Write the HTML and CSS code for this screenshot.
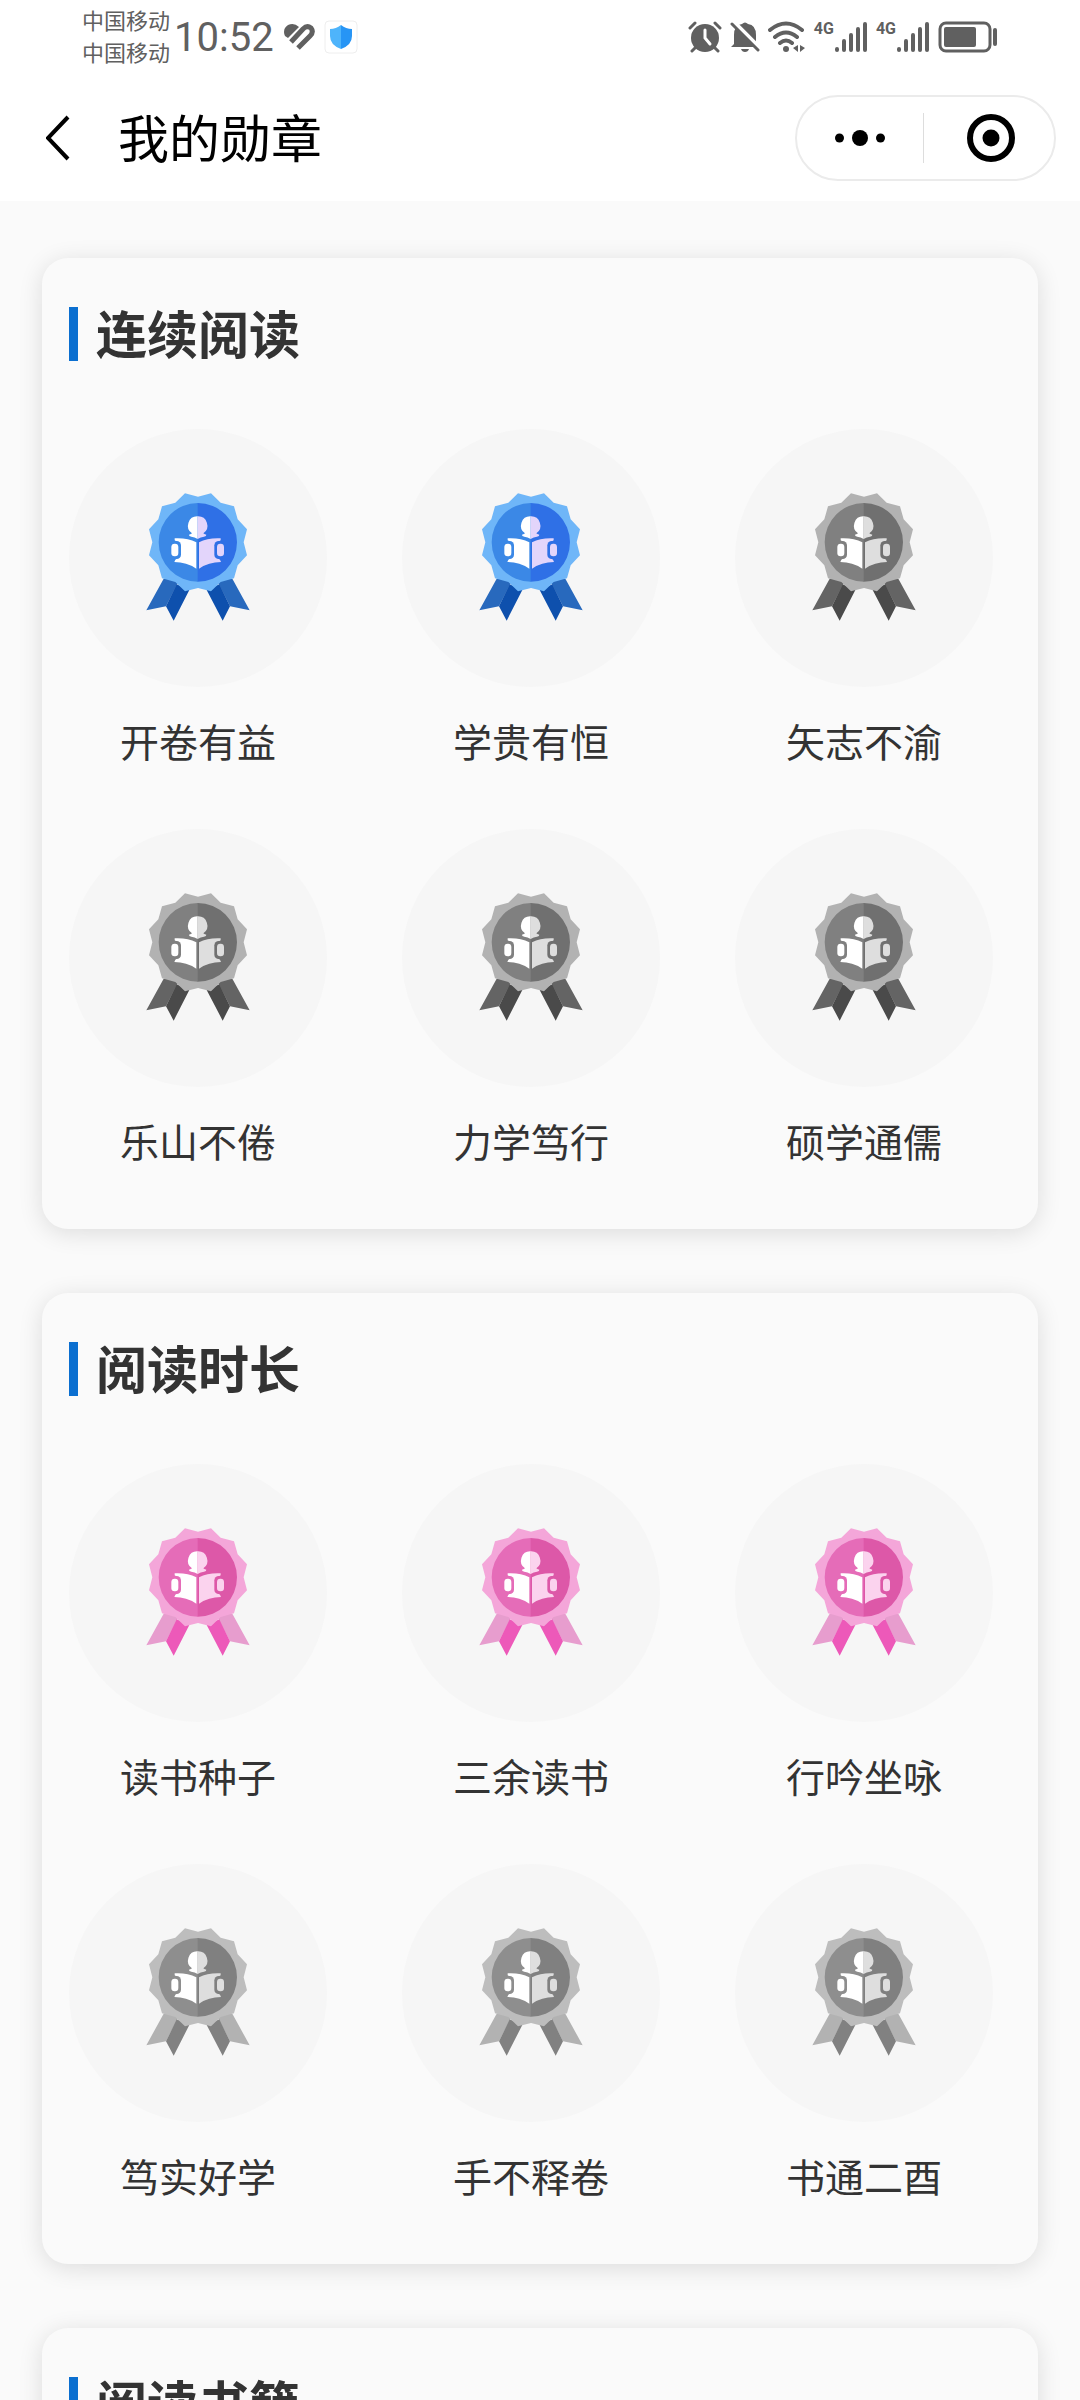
FILE: index.html
```html
<!DOCTYPE html>
<html lang="zh-CN">
<head>
    <meta charset="UTF-8">
    <meta name="viewport" content="width=device-width, initial-scale=1.0">
    <title>我的勋章</title>

    <link rel="stylesheet" href="styles.css">
</head>
<body>
    <!-- Shared icon shapes -->
    <svg class="defs" aria-hidden="true">
        <symbol id="medal" viewBox="0 10 408 450">
            <path class="ribbon" d="M101 297L150 300L140 316L108 380L49 392Z M307 297L258 300L268 316L300 380L359 392Z"/>
            <path class="ribbon-dark" d="M140 314L178 331L131 423L108 380Z M268 314L230 331L278 423L300 380Z"/>
            <path class="seal" d="M204 51L243 41L272 69L312 80L323 119L351 149L341 188L351 227L323 257L312 296L272 307L243 335L204 325L165 335L136 307L96 296L85 257L57 227L67 188L57 149L85 119L96 80L136 69L165 41Z"/>
            <path class="face" d="M204 70A118 118 0 0 0 204 306Z"/>
            <path class="face-dark" d="M203 70A118 118 0 0 1 203 306Z"/>
            <path class="page" d="M203 110A28 28 0 0 0 186 161Q184 164 177 165Q176 170 184 171Q194 172 203 178Z"/>
            <path class="page-dark" d="M203 110A28 28 0 0 1 220 161Q222 164 229 165Q230 170 222 171Q212 172 203 178Z"/>
            <path class="page" d="M134 176Q172 174 199 188V267Q170 247 133 247L136 240Q142 237 145 231V191Q142 186 134 182Z"/>
            <path class="page-dark" d="M272 176Q234 174 207 188V267Q236 247 273 247L270 240Q264 237 261 231V191Q264 186 272 182Z"/>
            <rect class="face" x="124" y="184" width="29" height="54" rx="13"/>
            <rect class="face-dark" x="253" y="184" width="29" height="54" rx="13"/>
            <rect class="page" x="124" y="192" width="21" height="38" rx="10"/>
            <rect class="page-dark" x="261" y="192" width="21" height="38" rx="10"/>
        </symbol>
        <symbol id="signal" viewBox="0 0 34 32">
            <path d="M3 29V28M10 29V20M17 29V14M24 29V8M31 29V3" fill="none" stroke="currentColor" stroke-width="4" stroke-linecap="round"/>
        </symbol>
    </svg>

    <div class="screen">
        <div class="status-bar">
            <div class="carriers">
                <span>中国移动</span>
                <span>中国移动</span>
            </div>
            <span class="clock">10:52</span>
            <svg class="health" width="32" height="28" viewBox="0 0 32 28">
                <path d="M2 13Q-1 6 5 2Q11-1 16 4L5 15Z" fill="currentColor"/>
                <path d="M8 19L20 6Q24 2 28 5Q31 9 27 13L15 25" fill="none" stroke="currentColor" stroke-width="5"/>
            </svg>
            <svg class="shield" width="34" height="34" viewBox="0 0 34 34">
                <rect x="1" y="1" width="32" height="32" rx="4" fill="#fff" stroke="#eee"/>
                <path d="M17 5Q12 9 6 9V16Q6 25 17 29Z" fill="#4eb4fb"/>
                <path d="M17 5Q22 9 28 9V16Q28 25 17 29Z" fill="#2795f5"/>
            </svg>

            <div class="indicators">
                <svg width="34" height="32" viewBox="0 0 34 32">
                    <circle cx="17" cy="17" r="14" fill="currentColor"/>
                    <path d="M2 7L7 2M32 7L27 2M7 27L4 30M27 27L30 30" stroke="currentColor" stroke-width="3" stroke-linecap="round"/>
                    <path d="M17 9V17L22 23" fill="none" stroke="#fff" stroke-width="3" stroke-linecap="round"/>
                </svg>
                <svg width="30" height="32" viewBox="0 0 30 32">
                    <path d="M4 23V14Q4 4 12 3Q15 0 18 3Q26 4 26 14V23L29 26H1ZM11 28H19Q18 31 15 31Q12 31 11 28Z" fill="currentColor"/>
                    <path d="M3 0L31 28" stroke="#fff" stroke-width="4"/>
                    <path d="M2 3L28 29" stroke="currentColor" stroke-width="3" stroke-linecap="round"/>
                </svg>
                <svg width="38" height="32" viewBox="0 0 38 32">
                    <path d="M2 9Q18-4 34 9M7 16Q18 7 29 16M12 22Q18 17 24 22" fill="none" stroke="currentColor" stroke-width="4" stroke-linecap="round"/>
                    <circle cx="18" cy="28" r="3" fill="currentColor"/>
                    <path d="M30 24V31L25 27ZM32 24V31L37 27Z" fill="currentColor"/>
                </svg>
                <div class="network">
                    <span>4G</span>
                    <svg width="34" height="32"><use href="#signal"/></svg>
                </div>
                <div class="network">
                    <span>4G</span>
                    <svg width="34" height="32"><use href="#signal"/></svg>
                </div>
                <svg width="60" height="32" viewBox="0 0 60 32">
                    <rect x="2" y="2" width="50" height="28" rx="6" fill="none" stroke="currentColor" stroke-width="3"/>
                    <rect x="6" y="6" width="32" height="20" rx="2" fill="currentColor"/>
                    <path d="M57 9V23" stroke="currentColor" stroke-width="4" stroke-linecap="round"/>
                </svg>
            </div>
        </div>

        <header class="nav">
            <button class="back" type="button" aria-label="返回">
                <svg width="24" height="46" viewBox="0 0 24 46">
                    <path d="M22 2L2 23L22 44" fill="none" stroke="currentColor" stroke-width="4"/>
                </svg>
            </button>
            <h1>我的勋章</h1>
            <div class="capsule">
                <button type="button" aria-label="更多">
                    <svg width="50" height="16" viewBox="0 0 50 16" fill="currentColor">
                        <circle cx="4.5" cy="8" r="4.5"/>
                        <circle cx="25" cy="8" r="8"/>
                        <circle cx="45.5" cy="8" r="4.5"/>
                    </svg>
                </button>
                <button type="button" aria-label="关闭">
                    <svg width="48" height="48" viewBox="0 0 48 48">
                        <circle cx="24" cy="24" r="21" fill="none" stroke="currentColor" stroke-width="6"/>
                        <circle cx="24" cy="24" r="8.5" fill="currentColor"/>
                    </svg>
                </button>
            </div>
        </header>

        <main>
            <section class="card">
                <h2>连续阅读</h2>
                <ul class="medals">
                    <li class="blue"><div class="circle"><svg><use href="#medal"/></svg></div><p>开卷有益</p></li>
                    <li class="blue"><div class="circle"><svg><use href="#medal"/></svg></div><p>学贵有恒</p></li>
                    <li class="gray"><div class="circle"><svg><use href="#medal"/></svg></div><p>矢志不渝</p></li>
                    <li class="gray"><div class="circle"><svg><use href="#medal"/></svg></div><p>乐山不倦</p></li>
                    <li class="gray"><div class="circle"><svg><use href="#medal"/></svg></div><p>力学笃行</p></li>
                    <li class="gray"><div class="circle"><svg><use href="#medal"/></svg></div><p>硕学通儒</p></li>
                </ul>
            </section>

            <section class="card">
                <h2>阅读时长</h2>
                <ul class="medals">
                    <li class="pink"><div class="circle"><svg><use href="#medal"/></svg></div><p>读书种子</p></li>
                    <li class="pink"><div class="circle"><svg><use href="#medal"/></svg></div><p>三余读书</p></li>
                    <li class="pink"><div class="circle"><svg><use href="#medal"/></svg></div><p>行吟坐咏</p></li>
                    <li class="silver"><div class="circle"><svg><use href="#medal"/></svg></div><p>笃实好学</p></li>
                    <li class="silver"><div class="circle"><svg><use href="#medal"/></svg></div><p>手不释卷</p></li>
                    <li class="silver"><div class="circle"><svg><use href="#medal"/></svg></div><p>书通二酉</p></li>
                </ul>
            </section>

            <section class="card">
                <h2>阅读书籍</h2>
            </section>
        </main>
    </div>
</body>
</html>
```

FILE: styles.css
```css
* {
    box-sizing: border-box;
    margin: 0;
    padding: 0;
}
body {
    background-color: #fafafa;
    color: #333;
    font-family: "Noto Sans CJK SC", sans-serif;
}
svg {
    display: block;
}
button {
    border: 0;
    background: none;
    color: inherit;
}
.defs {
    position: absolute;
    width: 0;
    height: 0;
}
.screen {
    height: 100vh;
    overflow: hidden;
}

/* Status bar */
.status-bar {
    display: flex;
    align-items: center;
    height: 74px;
    padding: 0 82px;
    background-color: #fff;
    color: #606060;
}
.carriers {
    display: flex;
    flex-direction: column;
    padding-bottom: 4px;
    font-size: 22px;
    line-height: 32px;
}
.clock {
    margin-left: 4px;
    font-family: Roboto, sans-serif;
    font-size: 40px;
}
.health {
    margin-left: 9px;
}
.shield {
    margin-left: 9px;
}
.indicators {
    display: flex;
    gap: 8px;
    margin-left: auto;
}
.network {
    display: flex;
}
.network span {
    font-family: "Liberation Sans Narrow", Roboto, sans-serif;
    font-size: 16px;
    font-weight: bold;
    line-height: 16px;
}

/* Navigation bar */
.nav {
    display: flex;
    align-items: center;
    height: 127px;
    padding: 0 24px 0 46px;
    background-color: #fff;
    color: #000;
}
.nav h1 {
    margin-left: 48px;
    padding-bottom: 4px;
    font-size: 51px;
    font-weight: normal;
    line-height: 72px;
}
.capsule {
    display: flex;
    align-items: center;
    width: 261px;
    height: 86px;
    margin-left: auto;
    border: 2px solid #ebebeb;
    border-radius: 43px;
}
.capsule button {
    display: flex;
    flex: 1;
    align-items: center;
    justify-content: center;
    height: 50px;
}
.capsule button + button {
    padding-left: 4px;
    border-left: 1px solid #ddd;
}

/* Medal cards */
main {
    display: flex;
    flex-direction: column;
    gap: 64px;
    padding: 57px 42px;
}
.card {
    padding: 49px 45px 62px 27px;
    border-radius: 26px;
    background-color: #fafafa;
    box-shadow: 0 4px 24px rgba(0, 0, 0, 0.12);
}
.card h2 {
    padding: 0 0 4px 18px;
    border-left: 9px solid #0b6fd0;
    font-size: 51px;
    font-weight: bold;
    line-height: 50px;
}
.medals {
    display: grid;
    grid-template-columns: repeat(3, 258px);
    justify-content: space-between;
    row-gap: 62px;
    margin-top: 68px;
    list-style: none;
}
.circle {
    display: flex;
    align-items: center;
    justify-content: center;
    height: 258px;
    border-radius: 50%;
    background-color: #f6f6f6;
}
.circle svg {
    width: 136px;
    height: 150px;
}
.medals p {
    margin-top: 26px;
    font-size: 39px;
    line-height: 54px;
    text-align: center;
}

/* Medal colours */
.seal {
    fill: var(--seal);
}
.face {
    fill: var(--face);
}
.face-dark {
    fill: var(--face-dark);
}
.ribbon {
    fill: var(--ribbon);
}
.ribbon-dark {
    fill: var(--ribbon-dark);
}
.page {
    fill: #fff;
}
.page-dark {
    fill: var(--page-dark);
}
.blue {
    --seal: #6fb6f8;
    --face: #3b88e6;
    --face-dark: #2f70e6;
    --ribbon: #2869bd;
    --ribbon-dark: #0e50ad;
    --page-dark: #e3d5fb;
}
.gray {
    --seal: #b2b2b2;
    --face: #808080;
    --face-dark: #707070;
    --ribbon: #646464;
    --ribbon-dark: #4a4a4a;
    --page-dark: #dedede;
}
.pink {
    --seal: #f4a6d9;
    --face: #e56cb8;
    --face-dark: #dd58a8;
    --ribbon: #e79dce;
    --ribbon-dark: #ed59b9;
    --page-dark: #fbd3ee;
}
.silver {
    --seal: #bdbdbd;
    --face: #8e8e8e;
    --face-dark: #808080;
    --ribbon: #b2b2b2;
    --ribbon-dark: #818181;
    --page-dark: #dedede;
}
```
